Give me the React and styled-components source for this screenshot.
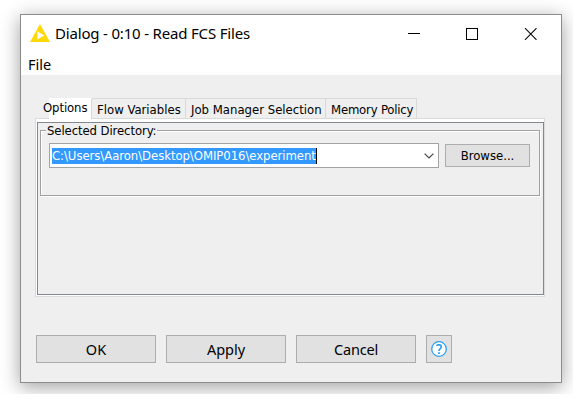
import React from "react";
import styled, { createGlobalStyle } from "styled-components";

const Global = createGlobalStyle`
  * { box-sizing: border-box; }
  body { margin: 0; background: #fff; color: #000; font-family: "Noto Sans", "Open Sans", sans-serif; }
`;

const Desktop = styled.div`
  width: 573px;
  height: 394px;
  padding: 14px 0 0 20px;
  overflow: hidden;
`;

const Window = styled.div`
  width: 542px;
  height: 369px;
  border: 1px solid #8c8c8c;
  background: #efefef;
  display: flex;
  flex-direction: column;
  box-shadow: 0 4px 18px rgba(0, 0, 0, 0.38);
`;

const TitleBar = styled.div`
  height: 38px;
  flex: none;
  background: #fff;
  display: flex;
  align-items: center;
  padding: 0 0 2px 9px;
`;

const Title = styled.div`
  flex: 1;
  margin-left: 5px;
  font-size: 15px;
  line-height: 36px;
  letter-spacing: ${(p) => p.$spacing}px;
  white-space: nowrap;
`;

const Controls = styled.div`
  display: flex;
  gap: 46px;
  padding-right: 24px;
  margin-top: 1px;
  svg { display: block; }
`;

const MenuBar = styled.div`
  height: 22px;
  flex: none;
  background: #fff;
  padding-left: 7px;
  font-size: 14.5px;
  line-height: 22px;
  letter-spacing: 0;
`;

const Body = styled.div`
  flex: 1;
  padding: 23px 16px 0 14px;
`;

const Tabs = styled.div`
  display: flex;
  height: 20px;
  padding-left: 14px;
`;

const Tab = styled.div`
  width: ${(p) => p.$width}px;
  height: 20px;
  border: solid #d9d9d9;
  border-width: 1px 1px 0 0;
  padding-left: 5px;
  font: 13px/22px "DejaVu Sans Condensed", "DejaVu Sans", sans-serif;
  letter-spacing: ${(p) => p.$spacing}px;
  white-space: nowrap;
`;

const ActiveTab = styled(Tab)`
  height: 21px;
  background: #fff;
  border-top-color: #fff;
  padding-left: 0;
  line-height: 18px;
  text-indent: -6px;
  z-index: 1;
`;

const Pane = styled.div`
  width: 510px;
  height: 179px;
  border: 1px solid #dadada;
  background: #fff;
  padding: 3px 0 1px 1px;
`;

const PaneInner = styled.div`
  height: 173px;
  width: 507px;
  border: 1px solid #828790;
  background: #efefef;
  padding: 7px 2px 0;
`;

const Group = styled.fieldset`
  position: relative;
  margin: 0;
  width: 500px;
  height: 66px;
  border: 1px solid #a0a0a4;
  box-shadow: 1px 1px 0 #fff, inset 1px 1px 0 #fff;
  padding: 12px 0 0 8px;
`;

const Legend = styled.div`
  position: absolute;
  left: 5px;
  top: -7px;
  width: 111px;
  padding-left: 1px;
  background: #efefef;
  font: 13px/14px "DejaVu Sans Condensed", "DejaVu Sans", sans-serif;
  letter-spacing: ${(p) => p.$spacing}px;
  white-space: nowrap;
`;

const PathRow = styled.div`
  display: flex;
  align-items: center;
  gap: 6px;
`;

const Combo = styled.div`
  width: 390px;
  height: 25px;
  border: 1px solid #a3a3a7;
  background: #fff;
  display: flex;
  align-items: center;
  justify-content: space-between;
  padding: 0 4px 0 2px;
`;

const Selection = styled.div`
  width: 265px;
  height: 16px;
  background: #3399ff;
  border-right: 1px solid #000;
  color: #fff;
  font: 13px/15px "DejaVu Sans Condensed", "DejaVu Sans", sans-serif;
  letter-spacing: ${(p) => p.$spacing}px;
  white-space: nowrap;
`;

const Button = styled.div`
  width: ${(p) => p.$width || 120}px;
  height: 28px;
  border: 1px solid #adadad;
  background: #e1e1e1;
  font-size: 14.5px;
  letter-spacing: ${(p) => p.$spacing || 0}px;
  display: flex;
  align-items: center;
  justify-content: center;
`;

const BrowseButton = styled(Button)`
  height: 23px;
  font: 13px/20px "DejaVu Sans Condensed", "DejaVu Sans", sans-serif;
`;

const Actions = styled.div`
  display: flex;
  gap: 10px;
  margin: 38px 0 0 1px;
`;

export default function App() {
  return (
    <>
      <Global />
      <Desktop>
        <Window>
          <TitleBar>
            <svg width="20" height="18" viewBox="0 0 20 18">
              <path d="M10 0 L20 18 H0Z" fill="#ffd80a" />
              <path d="M7.3 7.3 L14.2 11.6 L7.3 15.4Z" fill="#fff" />
            </svg>
            <Title $spacing={-0.18}>Dialog - 0:10 - Read FCS Files</Title>
            <Controls>
              <svg width="12" height="12" shapeRendering="crispEdges">
                <path d="M0 5.5H12" stroke="#000" />
              </svg>
              <svg width="12" height="12" shapeRendering="crispEdges">
                <rect x=".5" y=".5" width="11" height="11" fill="none" stroke="#000" />
              </svg>
              <svg width="13" height="12">
                <path d="M1 .2L12.5 11.8M12.5 .2L1 11.8" stroke="#000" strokeWidth="1.1" />
              </svg>
            </Controls>
          </TitleBar>
          <MenuBar>File</MenuBar>
          <Body>
            <Tabs>
              <ActiveTab $width={43} $spacing={-0.1}>Options</ActiveTab>
              <Tab $width={94} $spacing={0}>Flow Variables</Tab>
              <Tab $width={140} $spacing={0}>Job Manager Selection</Tab>
              <Tab $width={91} $spacing={-0.2}>Memory Policy</Tab>
            </Tabs>
            <Pane>
              <PaneInner>
                <Group>
                  <Legend $spacing={-0.1}>Selected Directory:</Legend>
                  <PathRow>
                    <Combo>
                      <Selection $spacing={-0.06}>C:\Users\Aaron\Desktop\OMIP016\experiment</Selection>
                      <svg width="10" height="6">
                        <path d="M.6 .6L5 5L9.4 .6" fill="none" stroke="#444" strokeWidth="1.2" />
                      </svg>
                    </Combo>
                    <BrowseButton $width={85}>Browse...</BrowseButton>
                  </PathRow>
                </Group>
              </PaneInner>
            </Pane>
            <Actions>
              <Button>OK</Button>
              <Button>Apply</Button>
              <Button $spacing={-0.2}>Cancel</Button>
              <Button $width={26}>
                <svg width="16" height="16" viewBox="0 0 16 16" fill="none" stroke="#2da0f5">
                  <circle cx="8" cy="8" r="7.3" fill="#fff" strokeWidth="1.3" />
                  <path d="M5.4 4.6C6.6 3.6 10.3 3.4 10.3 5.8C10.3 7.6 8 7.6 8 10" strokeWidth="1.7" />
                  <path d="M8 11.2V13" strokeWidth="1.8" />
                </svg>
              </Button>
            </Actions>
          </Body>
        </Window>
      </Desktop>
    </>
  );
}
